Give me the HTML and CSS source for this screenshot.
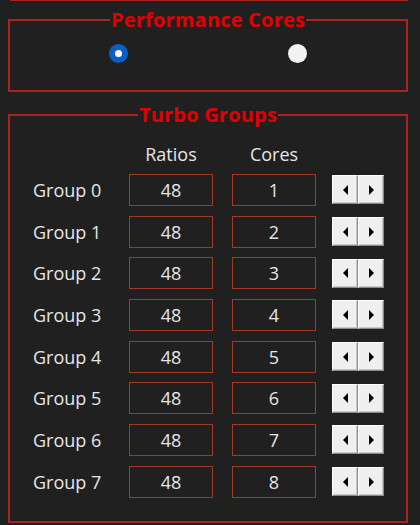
FILE: index.html
```html
<!DOCTYPE html>
<html lang="en">
<head>
  <meta charset="UTF-8" />
  <title>Turbo Ratios</title>
  <link rel="stylesheet" href="styles.css">
</head>
<body>
  <div class="prev-box"></div>

  <fieldset class="group perf">
    <legend>Performance Cores</legend>
    <div class="radios">
      <span class="radio checked"></span>
      <span class="radio"></span>
    </div>
  </fieldset>

  <fieldset class="group turbo">
    <legend>Turbo Groups</legend>
    <div class="grid">
      <span></span>
      <span class="head">Ratios</span>
      <span class="head">Cores</span>
      <span></span>

      <span class="label">Group 0</span><span class="box">48</span><span class="box">1</span>
      <span class="spin"><button class="dec"></button><button class="inc"></button></span>
      <span class="label">Group 1</span><span class="box">48</span><span class="box">2</span>
      <span class="spin"><button class="dec"></button><button class="inc"></button></span>
      <span class="label">Group 2</span><span class="box">48</span><span class="box">3</span>
      <span class="spin"><button class="dec"></button><button class="inc"></button></span>
      <span class="label">Group 3</span><span class="box">48</span><span class="box">4</span>
      <span class="spin"><button class="dec"></button><button class="inc"></button></span>
      <span class="label">Group 4</span><span class="box">48</span><span class="box">5</span>
      <span class="spin"><button class="dec"></button><button class="inc"></button></span>
      <span class="label">Group 5</span><span class="box">48</span><span class="box">6</span>
      <span class="spin"><button class="dec"></button><button class="inc"></button></span>
      <span class="label">Group 6</span><span class="box">48</span><span class="box">7</span>
      <span class="spin"><button class="dec"></button><button class="inc"></button></span>
      <span class="label">Group 7</span><span class="box">48</span><span class="box">8</span>
      <span class="spin"><button class="dec"></button><button class="inc"></button></span>
    </div>
  </fieldset>
</body>
</html>
```

FILE: styles.css
```css
body {
  margin: 0 12px 0 8px;
  background: #202020;
  font-family: "Open Sans", "Noto Sans", sans-serif;
  color: #e6e6e6;
}

.prev-box {
  height: 0;
  margin: -1px 0 0 2px;
  border-bottom: 2px solid #a8241c;
}

.group {
  margin: 0;
  padding: 0;
  border: 2px solid #a8241c;
  min-width: 0;
}
.group legend {
  margin: 0 auto;
  padding: 0 1px;
  color: #e00000;
  font-weight: bold;
  font-size: 20px;
  line-height: 24px;
  letter-spacing: 0.2px;
}

.perf {
  margin-top: 7px;
  height: 80px;
}
.radios {
  display: flex;
  justify-content: center;
  gap: 160px;
  padding-top: 12px;
}
.radio {
  width: 19px;
  height: 19px;
  border-radius: 50%;
  background: #f2f2f2;
}
.radio.checked {
  background: #fff;
  border: 6px solid #0a5fc4;
  width: 7px;
  height: 7px;
}

.turbo {
  margin-top: 11px;
  height: 416px;
}
.grid {
  display: grid;
  grid-template-columns: 96px 84px 103px 68px;
  grid-template-rows: 32px;
  grid-auto-rows: 41.7px;
  padding: 10px 0 0 23px;
  align-items: center;
  font-size: 18px;
}
.grid > :nth-child(4n+3) { margin-left: 19px; }
.grid > :nth-child(4n) { margin-left: 16px; }

.head {
  text-align: center;
  margin-top: 2px;
}
.box {
  box-sizing: border-box;
  height: 32px;
  border: 1px solid #a23a28;
  text-align: center;
  line-height: 30px;
}
.spin {
  display: flex;
  height: 29px;
}
.spin button {
  display: flex;
  align-items: center;
  justify-content: center;
  width: 26px;
  height: 29px;
  margin: 0;
  padding: 0;
  background: #efefef;
  border: 1px solid;
  border-color: #fff #8a8a8a #8a8a8a #fff;
  box-shadow: inset -1px -1px 0 #c8c8c8;
}
.spin button::before {
  content: "";
  border-top: 5px solid transparent;
  border-bottom: 5px solid transparent;
}
.spin .dec::before { border-right: 5px solid #000; }
.spin .inc::before { border-left: 5px solid #000; }
```
